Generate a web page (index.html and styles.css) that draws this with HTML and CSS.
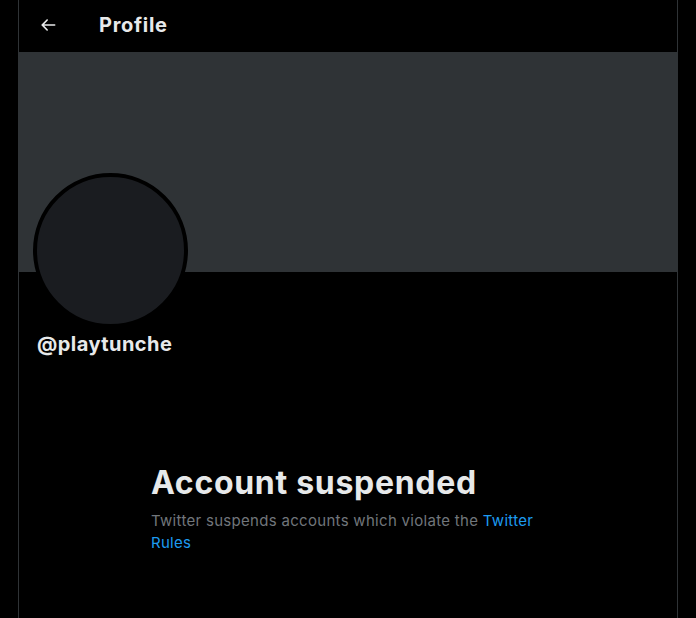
FILE: index.html
```html
<!DOCTYPE html>
<html>
<head>
<meta charset="utf-8">
<link rel="stylesheet" href="styles.css">
</head>
<body>
<div class="column">
  <header class="topbar">
    <button class="back" aria-label="Back">
      <svg viewBox="0 0 24 24" width="20" height="20"><path fill="currentColor" d="M20 11H7.414l4.293-4.293c.39-.39.39-1.023 0-1.414s-1.023-.39-1.414 0l-6 6c-.39.39-.39 1.023 0 1.414l6 6c.195.195.45.293.707.293s.512-.098.707-.293c.39-.39.39-1.023 0-1.414L7.414 13H20c.553 0 1-.447 1-1s-.447-1-1-1z"/></svg>
    </button>
    <h1 class="title">Profile</h1>
  </header>
  <div class="banner"></div>
  <div class="profile">
    <div class="avatar"></div>
    <div class="handle">@playtunche</div>
  </div>
  <section class="notice">
    <h2 class="notice-title">Account suspended</h2>
    <p class="notice-text"><span>Twitter suspends accounts which violate the </span><a href="#" class="link">Twitter Rules</a></p>
  </section>
</div>
</body>
</html>
```
FILE: styles.css
```css
html, body {
  margin: 0;
  padding: 0;
  background: #000;
  height: 100%;
  overflow: hidden;
}
body {
  font-family: Inter, "Liberation Sans", Arial, sans-serif;
  color: #e7e9ea;
}
.column {
  margin-left: 18px;
  width: 658px;
  min-height: 100%;
  border-left: 1px solid #2f3336;
  border-right: 1px solid #2f3336;
}
.topbar {
  height: 52px;
  display: flex;
  align-items: center;
  padding-left: 19px;
  box-sizing: border-box;
}
.back {
  background: none;
  border: 0;
  padding: 0;
  color: #e7e9ea;
  width: 20px;
  height: 20px;
  display: flex;
  margin-top: -2px;
}
.back svg { display: block; }
.title {
  margin: -2px 0 0 41px;
  font-size: 20px;
  font-weight: 700;
  line-height: 24px;
  letter-spacing: 0.7px;
}
.banner {
  height: 220px;
  background: #2f3336;
}
.profile {
  padding-left: 14px;
}
.avatar {
  width: 147px;
  height: 147px;
  border-radius: 50%;
  border: 4px solid #000;
  background: #1a1c20;
  margin-top: -99px;
}
.handle {
  margin-top: 4px;
  padding-left: 4px;
  font-size: 20px;
  font-weight: 700;
  line-height: 24px;
  letter-spacing: 0.45px;
}
.notice {
  margin: 108px 0 0 132px;
  width: 400px;
}
.notice-title {
  margin: 0;
  font-size: 32px;
  font-weight: 700;
  line-height: 38px;
  letter-spacing: 0.7px;
}
.notice-text {
  margin: 8px 0 0;
  font-size: 15px;
  line-height: 22px;
  letter-spacing: 0.3px;
  color: #71767b;
}
.link {
  color: #1d9bf0;
  text-decoration: none;
}
```
